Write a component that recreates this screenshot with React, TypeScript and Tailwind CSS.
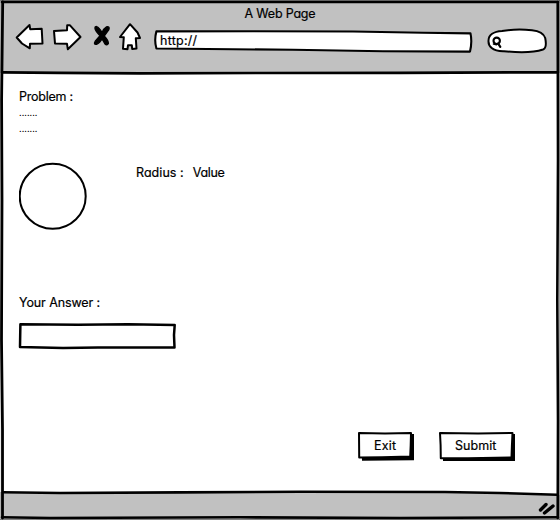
import type { ReactNode } from "react";

function Label({ children, className = "" }: { children: ReactNode; className?: string }) {
  return (
    <span
      className={`block w-max whitespace-pre font-[Inter,sans-serif] leading-4 text-black [font-feature-settings:'cv11'] [-webkit-text-stroke:0.2px_#000] ${className}`}
    >
      {children}
    </span>
  );
}

function Frame() {
  return (
    <svg className="pointer-events-none absolute inset-0" width="560" height="520" fill="none" stroke="#000" strokeLinecap="round">
      <path d="M440 490H560V495L440 492Z" fill="#fff" stroke="none" />
      <path d="M0 0H560V520H0Z" stroke="#444" strokeWidth="1" />
      <path d="M2 2L300 2L558 2" strokeWidth="2.6" />
      <path d="M2.7 2L1.6 100L2 200L1.5 340L2.5 430L2.5 518" strokeWidth="2.8" />
      <path d="M557.7 2L558 160L557.3 300L558 420L557.7 518" strokeWidth="2.6" />
      <path d="M2 517.3L50 518L240 517.3L400 518L558 517.3" strokeWidth="2.6" />
      <path d="M3 72.3L60 72.8L140 73.3L260 73L400 72.8L557 72.3" strokeWidth="2.7" />
      <path d="M3 492.2L60 493L180 492.4L300 491.8L445 492L500 493L557 494.7" strokeWidth="2.6" />
    </svg>
  );
}

function NavIcons() {
  return (
    <svg className="block shrink-0" width="128" height="32" viewBox="15 21 128 32" fill="#fff" stroke="#000" strokeWidth="2" strokeLinejoin="round" strokeLinecap="round">
      <path d="M16.7 37.5L29.5 25L30.2 29.2L41.7 28.8L42.5 43.5L30 43.8L29.8 48.3L22 43.5Z" />
      <path d="M54 31L67 30.2L67.2 25.2L70 25.3L80.5 37L67.8 49.2L67 43.8L55 43.5Z" />
      <path d="M95.2 26.8Q94 29 98 33.5L100 35.8L95.2 41.3Q93.2 44.8 96.5 44.4Q100 43 102 38.8L104.8 43.7Q107 46.2 108.4 43.5Q108.5 40.5 104.2 36L108.9 29.5Q110.1 26.2 106.5 26.8Q103.5 28.5 102 32.6Q99.5 27.5 96.5 26.5Z" fill="#000" strokeWidth="1.3" />
      <path d="M130 24.2L120 37L123.8 37.3L123 48.7L127.5 49.2L128 45.2L131.8 45.2L132.2 49L136.5 48.6L135.8 38.2L140 38L137.5 32.5Z" />
    </svg>
  );
}

function AddressBar() {
  return (
    <div className="relative flex h-[24px] w-[322px] shrink-0 items-center pl-[7px] pb-[1px]">
      <svg className="absolute inset-0" width="322" height="24" fill="#fff" stroke="#000" strokeWidth="2.1" strokeLinejoin="round">
        <path d="M3.4 2.4L100 2.2L200 2.5L270 3.7L317.5 4.4Q319.3 13 317 22.6L230 22.3L140 20.8L80 20.2L3.4 19.5Q1 11 3.4 2.4Z" />
      </svg>
      <Label className="relative text-[12.5px] tracking-[0.25px]">http://</Label>
    </div>
  );
}

function SearchBox() {
  return (
    <svg className="block shrink-0" width="62" height="27" viewBox="486 27 62 27" fill="#fff" stroke="#000" strokeWidth="2">
      <path d="M502 31Q516 28.6 532 30.2Q543 31.2 545.2 38Q547.2 48 543 49.5Q530 53.8 504 51.2C492 51.5 488.3 46 488.5 41C488.3 35 494 31.5 502 31Z" />
      <circle cx="496.7" cy="40.8" r="3.2" strokeWidth="2.1" />
      <path d="M498.2 43.6L500.3 46.8" strokeWidth="2.2" fill="none" strokeLinecap="round" />
      <path d="M493.5 44L496.5 44.6" strokeWidth="1.6" strokeLinecap="round" />
    </svg>
  );
}

function AnswerInput() {
  return (
    <div className="relative h-[28px] w-[159px]">
      <svg className="block" width="159" height="28" fill="#fff" stroke="#000" strokeWidth="2.5" strokeLinejoin="round">
        <path d="M2.4 2.2L60 2.7L110 2.3L156.7 3L156 13L156.5 25.5L120 25.5L80 25.4L45 26L2 24.9L2.2 13Z" />
      </svg>
    </div>
  );
}

function SketchButton({ wide, children }: { wide?: boolean; children: ReactNode }) {
  return (
    <button className={`relative flex h-[31px] items-center ${wide ? "w-[78px] pl-[17px]" : "w-[58px] pl-[17px]"}`}>
      <svg className="absolute inset-0 h-full w-full" stroke="#000" strokeWidth="2" strokeLinejoin="round">
        {wide ? (
          <>
            <path d="M5 3L77 3L77 30L5 30Z" stroke="none" />
            <path d="M2 2L40 2.5L74.5 1.9L73.9 15L73.5 26.5L30 27.3L2.8 27.3L2.6 14Z" fill="#fff" />
          </>
        ) : (
          <>
            <path d="M4 3L57 3L57 29.3L5 29.7Z" stroke="none" />
            <path d="M2 2L28 2.5L54 1.9L53.7 14L53.2 25.6L25 26.2L2.2 26.6Z" fill="#fff" />
          </>
        )}
      </svg>
      <Label className={`relative -top-[1px] text-[12.5px] ${wide ? "tracking-[0.05px]" : "tracking-[0.2px]"}`}>{children}</Label>
    </button>
  );
}

export default function App() {
  return (
    <div className="relative flex h-[520px] w-[560px] flex-col overflow-hidden bg-white">
      <header className="h-[73px] shrink-0 bg-[#c1c1c1] pt-[6px]">
        <Label className="mx-auto text-[12.5px] tracking-[-0.2px]">A Web Page</Label>
        <div className="flex pl-[15px]">
          <div className="-mt-[1px]"><NavIcons /></div>
          <div className="ml-[10px] mt-[7px]"><AddressBar /></div>
          <div className="ml-[11px] mt-[5px]"><SearchBox /></div>
        </div>
      </header>
      <main className="flex flex-1 flex-col pl-[19px] pt-[16px]">
        <Label className="text-[12.5px] tracking-[-0.25px]">Problem :</Label>
        <Label className="text-[9px] tracking-[0.05px] [-webkit-text-stroke:0]">.......</Label>
        <Label className="text-[9px] tracking-[0.05px] [-webkit-text-stroke:0]">.......</Label>
        <div className="mt-[25px] flex">
          <svg width="69" height="68" fill="#fff" stroke="#000" strokeWidth="2">
            <ellipse cx="33.7" cy="34.2" rx="33" ry="32.5" />
          </svg>
          <div className="ml-[48px] mt-[3px] flex gap-[9px]">
            <Label className="text-[12.5px] tracking-[0.05px]">Radius :</Label>
            <Label className="text-[12.5px] tracking-[-0.3px]">Value</Label>
          </div>
        </div>
        <Label className="mt-[65px] text-[12.5px] tracking-[-0.1px]">Your Answer :</Label>
        <div className="-ml-[1px] mt-[11px]"><AnswerInput /></div>
        <div className="ml-[338px] mt-[81px] flex gap-[23px]">
          <SketchButton>Exit</SketchButton>
          <SketchButton wide>Submit</SketchButton>
        </div>
      </main>
      <footer className="flex h-[28px] shrink-0 items-center justify-end bg-[#c1c1c1] pr-[4px] pt-[3px]">
        <svg width="18" height="16" fill="none" stroke="#000" strokeWidth="3.4" strokeLinecap="round">
          <path d="M2.5 10L8 4.5M6.5 13L15 6" />
        </svg>
      </footer>
      <Frame />
    </div>
  );
}
